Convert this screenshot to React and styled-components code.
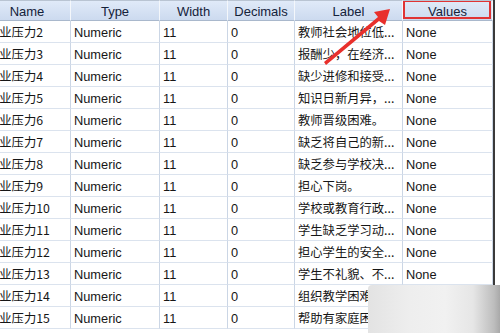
import React from "react";
import styled, { createGlobalStyle } from "styled-components";

const Global = createGlobalStyle`
  html, body { margin: 0; padding: 0; background: #fff; overflow: hidden; }
  body { width: 500px; height: 333px; }
`;

const Page = styled.div`
  position: relative;
  width: 500px;
  height: 333px;
  overflow: hidden;
  background: #fff;
  font-family: "Liberation Sans", Arial, "Noto Sans CJK SC", sans-serif;
  font-size: 12.5px;
  color: #161616;
`;

const Frame = styled.div`
  display: flex;
  margin-left: -16px;
`;

const Grid = styled.div`
  display: grid;
  grid-template-columns: 87px 89px 68px 67px 108px 90px;
  grid-auto-rows: 22px;
  grid-template-rows: 21px;
`;

const EdgeLine = styled.div`
  width: 2px;
  height: 285px;
  background: #3a3a3a;
`;

const HeaderCell = styled.div`
  position: relative;
  display: flex;
  align-items: center;
  justify-content: center;
  padding-top: 1px;
  background: linear-gradient(#e0eaf8, #ccdaef);
  border-top: 1px solid #b9c4d2;
  border-right: 1px solid #f4f7fb;
  border-bottom: 1px solid #a9b8cc;
  box-sizing: border-box;
  color: #14223a;
  font-size: 13px;
  white-space: nowrap;
  overflow: hidden;

  ${(p) =>
    p.$marked &&
    `
    &::after {
      content: "";
      position: absolute;
      left: 0;
      top: -1px;
      right: 1px;
      bottom: 1px;
      border: 2.5px solid #e03434;
    }
  `}
`;

const Cell = styled.div`
  display: flex;
  align-items: center;
  padding: 1px 3px 0 3px;
  box-sizing: border-box;
  border-right: 1px solid #cbd6e5;
  border-bottom: 1px solid #dbe3ee;
  white-space: nowrap;
  overflow: hidden;
  font-family: ${(p) =>
    p.$cjk
      ? `"Noto Sans CJK SC", "Liberation Sans", sans-serif`
      : `"Liberation Sans", Arial, "Noto Sans CJK SC", sans-serif`};
  font-size: ${(p) => (p.$cjk ? "12.3px" : "12.8px")};
`;

const Overlay = styled.svg`
  position: absolute;
  left: 0;
  top: 0;
  pointer-events: none;
`;

const Watermark = styled.div`
  position: absolute;
  left: 368px;
  top: 285px;
  width: 140px;
  height: 60px;
  border-top-left-radius: 4px;
  background: linear-gradient(
    90deg,
    #e3e3e3 0%,
    #eeeeee 30%,
    #f1f1f1 55%,
    #e6e6e6 75%,
    #bdbdbd 90%,
    #8e8e8e 100%
  );
`;

const headers = ["Name", "Type", "Width", "Decimals", "Label", "Values"];

const labels = [
  "教师社会地位低...",
  "报酬少，在经济...",
  "缺少进修和接受...",
  "知识日新月异，...",
  "教师晋级困难。",
  "缺乏将自己的新...",
  "缺乏参与学校决...",
  "担心下岗。",
  "学校或教育行政...",
  "学生缺乏学习动...",
  "担心学生的安全...",
  "学生不礼貌、不...",
  "组织教学困难...",
  "帮助有家庭困...",
];

export default function App() {
  return (
    <Page>
      <Global />
      <Frame>
        <Grid>
          {headers.map((h) => (
            <HeaderCell key={h} $marked={h === "Values"}>
              {h}
            </HeaderCell>
          ))}
          {labels.map((label, i) => (
            <React.Fragment key={i}>
              <Cell $cjk>职业压力{i + 2}</Cell>
              <Cell>Numeric</Cell>
              <Cell>11</Cell>
              <Cell>0</Cell>
              <Cell $cjk>{label}</Cell>
              <Cell>None</Cell>
            </React.Fragment>
          ))}
        </Grid>
        <EdgeLine />
      </Frame>
      <Overlay width="500" height="333" viewBox="0 0 500 333">
        <path
          d="M324 62 L326 65 L379 21 L385 25 L390 9 L374 12 L378 17 Z"
          fill="#e8302c"
        />
      </Overlay>
      <Watermark />
    </Page>
  );
}
